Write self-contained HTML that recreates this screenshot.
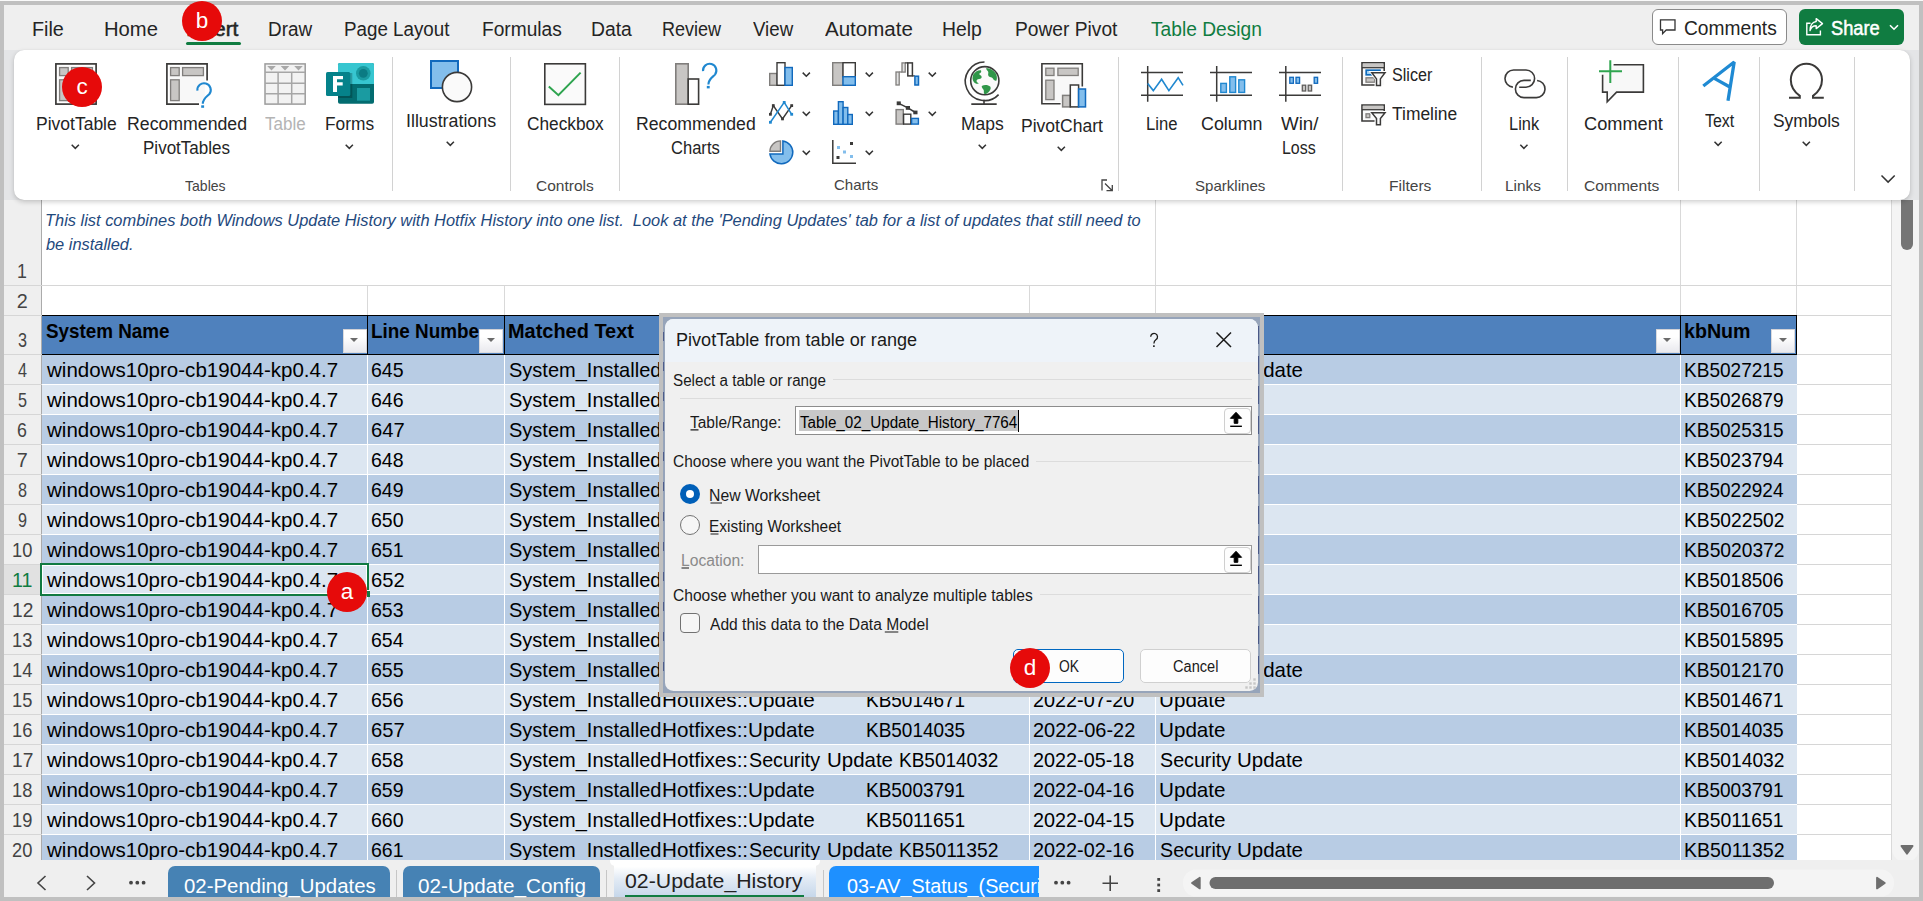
<!DOCTYPE html>
<html lang="en">
<head>
<meta charset="utf-8">
<title>Excel - PivotTable from table or range</title>
<style>
html,body{margin:0;padding:0}
body{width:1923px;height:901px;overflow:hidden;position:relative;background:#c0c0c0;font-family:"Liberation Sans",sans-serif;}
.a{position:absolute;display:block}
.t-semi{-webkit-text-stroke:0.5px currentColor}
.t{position:absolute;white-space:pre;line-height:1;transform-origin:0 0;display:block}
svg{position:absolute;overflow:visible}
.win{left:4px;top:5px;width:1915px;height:892px;background:#efefef}
.topedge{left:0;top:0;width:1923px;height:1px;background:#fafafa}
/* ribbon */
.ribside{left:4px;top:50px;width:1915px;height:150px;background:#e4e5e7}
.ribbon{left:14px;top:50px;width:1896px;height:150px;background:#fff;border-radius:10px;box-shadow:0 2px 5px rgba(0,0,0,.19),0 0 1px rgba(0,0,0,.10)}
.sep{width:1px;top:57px;height:134px;background:#d2d2d2}
.ins-ul{left:186px;top:42px;width:55px;height:3px;border-radius:2px;background:#107c41}
.btn-comments{left:1652px;top:9px;width:133px;height:34px;border:1px solid #8a8a8a;border-radius:6px;background:#fff}
.btn-share{left:1799px;top:9px;width:105px;height:36px;border-radius:6px;background:#107c41}
.mk{width:40px;height:40px;border-radius:50%;background:#e60a0a;color:#fff;font-size:22.5px;line-height:40px;text-align:center}
/* sheet */
.sheet{left:4px;top:200px;width:1888px;height:660px;background:#fff;overflow:hidden}
.rowhdr{left:4px;top:200px;width:37px;height:660px;background:#efefef}
.gl{background:#d6d6d6}
.vscroll{left:1892px;top:200px;width:27px;height:662px;background:#f4f4f4;border-radius:0 0 13px 13px}
.vthumb{left:1901px;top:200px;width:12px;height:50px;border-radius:0 0 6px 6px;background:#757575}
.hdr{background:#4f81bd}
.b1{background:#b8cce4}
.b2{background:#dce6f1}
.wl{background:#fff}
.bl{background:#000}
.fbtn{width:24px;height:24px;box-sizing:border-box;border:1px solid rgba(190,190,195,.55);background:linear-gradient(#ffffff 30%,#e9e9ee);}
.fbtn:after{content:"";position:absolute;left:6.5px;top:8.5px;border:4.6px solid transparent;border-top:4.8px solid #6b6b6b;border-bottom:0}
/* dialog */
.dframe{left:659px;top:313px;width:605px;height:383.7px;background:#c0c0c0}
.dframe2{left:662.7px;top:317px;width:597.3px;height:376.3px;background:#96a4ba}
.dlg{left:664.5px;top:318.5px;width:593.7px;height:372.2px;border-radius:8.5px;background:#f0f0f0;overflow:hidden}
.dtitle{left:0;top:0;width:595px;height:44px;background:#eef3f9}
.dline{height:1px;background:#dcdcdc}
.inp{background:#fff;border:1px solid #8c8c8c;box-sizing:border-box}
.ibtn{width:27px;height:26px;border:1px solid #cfcfcf;border-radius:4px;background:#fdfdfd;box-sizing:border-box}
/* sheet tabs */
.stbar{left:4px;top:860px;width:1915px;height:37px;background:#efefef}
.stab{top:866px;height:31px;border-radius:7px 7px 0 0}
.ssep{top:870px;width:1px;height:27px;background:#c6c6c6}
</style>
</head>
<body>
<div class="a win"></div>
<div class="a topedge"></div>
<!-- ===== Tab bar ===== -->
<div id="tabbar">
<div class="a ins-ul"></div>
<div class="a btn-comments"></div>
<svg style="left:1659px;top:18px" width="18" height="18" viewBox="0 0 18 18"><path d="M1.5 1.8h14.5v10.2H7.2L3.6 15.6V12H1.5z" fill="none" stroke="#333" stroke-width="1.3" stroke-linejoin="miter"/></svg>
<div class="a btn-share"></div>
<svg style="left:1805px;top:17px" width="20" height="20" viewBox="0 0 20 20"><g fill="none" stroke="#fff" stroke-width="1.4"><path d="M5.5 6.2H1.8v11.6h13.6V13.5"/><path d="M11.2 1.6l6.3 5-6.3 5V8.8C8 8.8 6 10.4 5 13.6 5 8.4 7.6 4.9 11.2 4.5z" stroke-linejoin="round"/></g></svg>
<svg style="left:1889px;top:24px" width="10" height="7" viewBox="0 0 10 7"><path d="M1 1.2l4 4 4-4" fill="none" stroke="#fff" stroke-width="1.6"/></svg>
<span class="t t-tab" style="left:31.99px;top:20.00px;font-size:19.5px;color:#242424;transform:scaleX(1.0143)">File</span>
<span class="t t-tab" style="left:103.96px;top:20.00px;font-size:19.5px;color:#242424;transform:scaleX(1.0365)">Home</span>
<span class="t t-tab" style="left:268.03px;top:20.00px;font-size:19.5px;color:#242424;transform:scaleX(0.9687)">Draw</span>
<span class="t t-tab" style="left:344.04px;top:20.00px;font-size:19.5px;color:#242424;transform:scaleX(0.9625)">Page Layout</span>
<span class="t t-tab" style="left:482.02px;top:20.00px;font-size:19.5px;color:#242424;transform:scaleX(0.9812)">Formulas</span>
<span class="t t-tab" style="left:591.01px;top:20.00px;font-size:19.5px;color:#242424;transform:scaleX(0.9914)">Data</span>
<span class="t t-tab" style="left:662.08px;top:20.00px;font-size:19.5px;color:#242424;transform:scaleX(0.9240)">Review</span>
<span class="t t-tab" style="left:753.00px;top:20.00px;font-size:19.5px;color:#242424;transform:scaleX(0.9572)">View</span>
<span class="t t-tab" style="left:825.00px;top:20.00px;font-size:19.5px;color:#242424;transform:scaleX(1.0530)">Automate</span>
<span class="t t-tab" style="left:942.01px;top:20.00px;font-size:19.5px;color:#242424;transform:scaleX(0.9934)">Help</span>
<span class="t t-tab" style="left:1015.02px;top:20.00px;font-size:19.5px;color:#242424;transform:scaleX(0.9843)">Power Pivot</span>
<span class="t t-tab t-semi" style="left:185.92px;top:20.00px;font-size:19.5px;color:#242424;transform:scaleX(1.0755)">Insert</span>
<span class="t t-tab" style="left:1151.00px;top:20.00px;font-size:19.5px;color:#107c41;transform:scaleX(0.9831)">Table Design</span>
<span class="t t-tab" style="left:1684.00px;top:19.00px;font-size:19.5px;color:#242424;transform:scaleX(0.9839)">Comments</span>
<span class="t t-tab t-semi" style="left:1831.00px;top:19.00px;font-size:19.5px;color:#ffffff;transform:scaleX(0.9377)">Share</span>
</div>
<!-- ===== Sheet ===== -->
<div id="sheet">
<div class="a sheet"></div>
<div class="a rowhdr"></div>
<div class="a" style="left:4px;top:564px;width:37px;height:31px;background:#e1e1e1;border-top:1px solid #c4c4c4;border-bottom:1px solid #c4c4c4;box-sizing:border-box"></div>
<div class="a" style="left:41px;top:200px;width:1px;height:660px;background:#ababab"></div>
<div class="a" style="left:367px;top:286px;width:1px;height:574px;background:#d9d9d9"></div>
<div class="a" style="left:504px;top:286px;width:1px;height:574px;background:#d9d9d9"></div>
<div class="a" style="left:1029px;top:286px;width:1px;height:574px;background:#d9d9d9"></div>
<div class="a" style="left:1155px;top:200px;width:1px;height:660px;background:#d9d9d9"></div>
<div class="a" style="left:1680px;top:200px;width:1px;height:660px;background:#d9d9d9"></div>
<div class="a" style="left:1796px;top:200px;width:1px;height:660px;background:#d9d9d9"></div>
<div class="a" style="left:1891px;top:200px;width:1px;height:660px;background:#d9d9d9"></div>
<div class="a gl" style="left:4px;top:285px;width:1887px;height:1px"></div>
<div class="a gl" style="left:4px;top:315px;width:1887px;height:1px"></div>
<div class="a gl" style="left:4px;top:354px;width:1887px;height:1px"></div>
<div class="a gl" style="left:4px;top:384px;width:1887px;height:1px"></div>
<div class="a gl" style="left:4px;top:414px;width:1887px;height:1px"></div>
<div class="a gl" style="left:4px;top:444px;width:1887px;height:1px"></div>
<div class="a gl" style="left:4px;top:474px;width:1887px;height:1px"></div>
<div class="a gl" style="left:4px;top:504px;width:1887px;height:1px"></div>
<div class="a gl" style="left:4px;top:534px;width:1887px;height:1px"></div>
<div class="a gl" style="left:4px;top:564px;width:1887px;height:1px"></div>
<div class="a gl" style="left:4px;top:594px;width:1887px;height:1px"></div>
<div class="a gl" style="left:4px;top:624px;width:1887px;height:1px"></div>
<div class="a gl" style="left:4px;top:654px;width:1887px;height:1px"></div>
<div class="a gl" style="left:4px;top:684px;width:1887px;height:1px"></div>
<div class="a gl" style="left:4px;top:714px;width:1887px;height:1px"></div>
<div class="a gl" style="left:4px;top:744px;width:1887px;height:1px"></div>
<div class="a gl" style="left:4px;top:774px;width:1887px;height:1px"></div>
<div class="a gl" style="left:4px;top:804px;width:1887px;height:1px"></div>
<div class="a gl" style="left:4px;top:834px;width:1887px;height:1px"></div>
<div class="a bl" style="left:42px;top:315px;width:1755px;height:40px"></div>
<div class="a hdr" style="left:42px;top:316px;width:325px;height:38px"></div>
<div class="a hdr" style="left:368px;top:316px;width:136px;height:38px"></div>
<div class="a hdr" style="left:505px;top:316px;width:524px;height:38px"></div>
<div class="a hdr" style="left:1030px;top:316px;width:125px;height:38px"></div>
<div class="a hdr" style="left:1156px;top:316px;width:524px;height:38px"></div>
<div class="a hdr" style="left:1681px;top:316px;width:115px;height:38px"></div>
<div class="a b1" style="left:42px;top:355px;width:1755px;height:29px"></div>
<div class="a wl" style="left:42px;top:384px;width:1755px;height:1px"></div>
<div class="a b2" style="left:42px;top:385px;width:1755px;height:29px"></div>
<div class="a wl" style="left:42px;top:414px;width:1755px;height:1px"></div>
<div class="a b1" style="left:42px;top:415px;width:1755px;height:29px"></div>
<div class="a wl" style="left:42px;top:444px;width:1755px;height:1px"></div>
<div class="a b2" style="left:42px;top:445px;width:1755px;height:29px"></div>
<div class="a wl" style="left:42px;top:474px;width:1755px;height:1px"></div>
<div class="a b1" style="left:42px;top:475px;width:1755px;height:29px"></div>
<div class="a wl" style="left:42px;top:504px;width:1755px;height:1px"></div>
<div class="a b2" style="left:42px;top:505px;width:1755px;height:29px"></div>
<div class="a wl" style="left:42px;top:534px;width:1755px;height:1px"></div>
<div class="a b1" style="left:42px;top:535px;width:1755px;height:29px"></div>
<div class="a wl" style="left:42px;top:564px;width:1755px;height:1px"></div>
<div class="a b2" style="left:42px;top:565px;width:1755px;height:29px"></div>
<div class="a wl" style="left:42px;top:594px;width:1755px;height:1px"></div>
<div class="a b1" style="left:42px;top:595px;width:1755px;height:29px"></div>
<div class="a wl" style="left:42px;top:624px;width:1755px;height:1px"></div>
<div class="a b2" style="left:42px;top:625px;width:1755px;height:29px"></div>
<div class="a wl" style="left:42px;top:654px;width:1755px;height:1px"></div>
<div class="a b1" style="left:42px;top:655px;width:1755px;height:29px"></div>
<div class="a wl" style="left:42px;top:684px;width:1755px;height:1px"></div>
<div class="a b2" style="left:42px;top:685px;width:1755px;height:29px"></div>
<div class="a wl" style="left:42px;top:714px;width:1755px;height:1px"></div>
<div class="a b1" style="left:42px;top:715px;width:1755px;height:29px"></div>
<div class="a wl" style="left:42px;top:744px;width:1755px;height:1px"></div>
<div class="a b2" style="left:42px;top:745px;width:1755px;height:29px"></div>
<div class="a wl" style="left:42px;top:774px;width:1755px;height:1px"></div>
<div class="a b1" style="left:42px;top:775px;width:1755px;height:29px"></div>
<div class="a wl" style="left:42px;top:804px;width:1755px;height:1px"></div>
<div class="a b2" style="left:42px;top:805px;width:1755px;height:29px"></div>
<div class="a wl" style="left:42px;top:834px;width:1755px;height:1px"></div>
<div class="a b1" style="left:42px;top:835px;width:1755px;height:29px"></div>
<div class="a wl" style="left:42px;top:864px;width:1755px;height:1px"></div>
<div class="a wl" style="left:367px;top:355px;width:1px;height:505px"></div>
<div class="a wl" style="left:504px;top:355px;width:1px;height:505px"></div>
<div class="a wl" style="left:1029px;top:355px;width:1px;height:505px"></div>
<div class="a wl" style="left:1155px;top:355px;width:1px;height:505px"></div>
<div class="a wl" style="left:1680px;top:355px;width:1px;height:505px"></div>
<div class="a fbtn" style="left:342.5px;top:328.7px"></div>
<div class="a fbtn" style="left:479.2px;top:328.7px"></div>
<div class="a fbtn" style="left:1655.5px;top:328.7px"></div>
<div class="a fbtn" style="left:1771.4px;top:328.7px"></div>
<span class="t t-rown" style="left:16.90px;top:262.00px;font-size:19.8px;color:#444444;transform:scaleX(0.9000)">1</span>
<span class="t t-rown" style="left:16.80px;top:292.00px;font-size:19.8px;color:#444444;transform:scaleX(1.0000)">2</span>
<span class="t t-rown" style="left:17.80px;top:331.00px;font-size:19.8px;color:#444444;transform:scaleX(0.8182)">3</span>
<span class="t t-rown" style="left:17.80px;top:361.00px;font-size:19.8px;color:#444444;transform:scaleX(0.8182)">4</span>
<span class="t t-rown" style="left:17.80px;top:391.00px;font-size:19.8px;color:#444444;transform:scaleX(0.8182)">5</span>
<span class="t t-rown" style="left:16.90px;top:421.00px;font-size:19.8px;color:#444444;transform:scaleX(0.9000)">6</span>
<span class="t t-rown" style="left:16.80px;top:451.00px;font-size:19.8px;color:#444444;transform:scaleX(1.0000)">7</span>
<span class="t t-rown" style="left:17.80px;top:481.00px;font-size:19.8px;color:#444444;transform:scaleX(0.8182)">8</span>
<span class="t t-rown" style="left:17.80px;top:511.00px;font-size:19.8px;color:#444444;transform:scaleX(0.8182)">9</span>
<span class="t t-rown" style="left:11.68px;top:541.00px;font-size:19.8px;color:#444444;transform:scaleX(0.9237)">10</span>
<span class="t t-rown" style="left:11.61px;top:571.00px;font-size:19.8px;color:#107c41;transform:scaleX(0.9932)">11</span>
<span class="t t-rown" style="left:11.63px;top:601.00px;font-size:19.8px;color:#444444;transform:scaleX(0.9699)">12</span>
<span class="t t-rown" style="left:11.68px;top:631.00px;font-size:19.8px;color:#444444;transform:scaleX(0.9237)">13</span>
<span class="t t-rown" style="left:11.68px;top:661.00px;font-size:19.8px;color:#444444;transform:scaleX(0.9237)">14</span>
<span class="t t-rown" style="left:11.68px;top:691.00px;font-size:19.8px;color:#444444;transform:scaleX(0.9237)">15</span>
<span class="t t-rown" style="left:11.68px;top:721.00px;font-size:19.8px;color:#444444;transform:scaleX(0.9237)">16</span>
<span class="t t-rown" style="left:11.63px;top:751.00px;font-size:19.8px;color:#444444;transform:scaleX(0.9699)">17</span>
<span class="t t-rown" style="left:11.68px;top:781.00px;font-size:19.8px;color:#444444;transform:scaleX(0.9237)">18</span>
<span class="t t-rown" style="left:11.68px;top:811.00px;font-size:19.8px;color:#444444;transform:scaleX(0.9237)">19</span>
<span class="t t-rown" style="left:11.68px;top:841.00px;font-size:19.8px;color:#444444;transform:scaleX(0.9237)">20</span>
<div class="a" id="sheettext" style="left:0;top:200px;width:1892px;height:660px;overflow:hidden"><div class="a" style="left:0;top:-200px">
<span class="t t-sheet" style="left:45.16px;top:213.00px;font-size:15.8px;color:#1f497d;transform:scaleX(1.0383);font-style:italic">This list combines both Windows Update History with Hotfix History into one list.  Look at the 'Pending Updates' tab for a list of updates that still need to</span>
<span class="t t-sheet" style="left:46.00px;top:237.00px;font-size:15.8px;color:#1f497d;transform:scaleX(1.0372);font-style:italic">be installed.</span>
<span class="t t-sheet" style="left:45.50px;top:322.00px;font-size:19.8px;color:#000;transform:scaleX(0.9519);font-weight:700">System Name</span>
<span class="t t-sheet" style="left:370.75px;top:322.00px;font-size:19.8px;color:#000;transform:scaleX(0.9537);font-weight:700">Line Numbe</span>
<span class="t t-sheet" style="left:507.69px;top:322.00px;font-size:19.8px;color:#000;transform:scaleX(1.0076);font-weight:700">Matched Text</span>
<span class="t t-sheet" style="left:1684.01px;top:322.00px;font-size:19.8px;color:#000;transform:scaleX(0.9931);font-weight:700">kbNum</span>
<span class="t t-sheet" style="left:46.64px;top:361.00px;font-size:19.8px;color:#000;transform:scaleX(1.0381)">windows10pro-cb19044-kp0.4.7</span>
<span class="t t-sheet" style="left:370.71px;top:361.00px;font-size:19.8px;color:#000;transform:scaleX(0.9874)">645</span>
<span class="t t-sheet" style="left:508.80px;top:361.00px;font-size:19.8px;color:#000;transform:scaleX(1.0118)">System_Installed</span>
<span class="t t-sheet" style="left:662.26px;top:361.00px;font-size:19.8px;color:#000;transform:scaleX(1.0444)">Hotfixes::</span>
<span class="t t-sheet" style="left:749.20px;top:361.00px;font-size:19.8px;color:#000;transform:scaleX(0.9949)">Security</span>
<span class="t t-sheet" style="left:826.87px;top:361.00px;font-size:19.8px;color:#000;transform:scaleX(1.0337)">Update</span>
<span class="t t-sheet" style="left:898.55px;top:361.00px;font-size:19.8px;color:#000;transform:scaleX(0.9512)">KB5027215</span>
<span class="t t-sheet" style="left:1159.80px;top:361.00px;font-size:19.8px;color:#000;transform:scaleX(0.9949)">Security</span>
<span class="t t-sheet" style="left:1237.47px;top:361.00px;font-size:19.8px;color:#000;transform:scaleX(1.0337)">Update</span>
<span class="t t-sheet" style="left:1684.04px;top:361.00px;font-size:19.8px;color:#000;transform:scaleX(0.9619)">KB5027215</span>
<span class="t t-sheet" style="left:46.64px;top:391.00px;font-size:19.8px;color:#000;transform:scaleX(1.0381)">windows10pro-cb19044-kp0.4.7</span>
<span class="t t-sheet" style="left:370.71px;top:391.00px;font-size:19.8px;color:#000;transform:scaleX(0.9874)">646</span>
<span class="t t-sheet" style="left:508.80px;top:391.00px;font-size:19.8px;color:#000;transform:scaleX(1.0118)">System_Installed</span>
<span class="t t-sheet" style="left:662.26px;top:391.00px;font-size:19.8px;color:#000;transform:scaleX(1.0444)">Hotfixes::</span>
<span class="t t-sheet" style="left:748.46px;top:391.00px;font-size:19.8px;color:#000;transform:scaleX(1.0448)">Update</span>
<span class="t t-sheet" style="left:866.04px;top:391.00px;font-size:19.8px;color:#000;transform:scaleX(0.9590)">KB5026879</span>
<span class="t t-sheet" style="left:1158.96px;top:391.00px;font-size:19.8px;color:#000;transform:scaleX(1.0432)">Update</span>
<span class="t t-sheet" style="left:1684.04px;top:391.00px;font-size:19.8px;color:#000;transform:scaleX(0.9619)">KB5026879</span>
<span class="t t-sheet" style="left:46.64px;top:421.00px;font-size:19.8px;color:#000;transform:scaleX(1.0381)">windows10pro-cb19044-kp0.4.7</span>
<span class="t t-sheet" style="left:370.68px;top:421.00px;font-size:19.8px;color:#000;transform:scaleX(1.0193)">647</span>
<span class="t t-sheet" style="left:508.80px;top:421.00px;font-size:19.8px;color:#000;transform:scaleX(1.0118)">System_Installed</span>
<span class="t t-sheet" style="left:662.26px;top:421.00px;font-size:19.8px;color:#000;transform:scaleX(1.0444)">Hotfixes::</span>
<span class="t t-sheet" style="left:748.46px;top:421.00px;font-size:19.8px;color:#000;transform:scaleX(1.0448)">Update</span>
<span class="t t-sheet" style="left:866.04px;top:421.00px;font-size:19.8px;color:#000;transform:scaleX(0.9590)">KB5025315</span>
<span class="t t-sheet" style="left:1158.96px;top:421.00px;font-size:19.8px;color:#000;transform:scaleX(1.0432)">Update</span>
<span class="t t-sheet" style="left:1684.04px;top:421.00px;font-size:19.8px;color:#000;transform:scaleX(0.9619)">KB5025315</span>
<span class="t t-sheet" style="left:46.64px;top:451.00px;font-size:19.8px;color:#000;transform:scaleX(1.0381)">windows10pro-cb19044-kp0.4.7</span>
<span class="t t-sheet" style="left:370.71px;top:451.00px;font-size:19.8px;color:#000;transform:scaleX(0.9874)">648</span>
<span class="t t-sheet" style="left:508.80px;top:451.00px;font-size:19.8px;color:#000;transform:scaleX(1.0118)">System_Installed</span>
<span class="t t-sheet" style="left:662.26px;top:451.00px;font-size:19.8px;color:#000;transform:scaleX(1.0444)">Hotfixes::</span>
<span class="t t-sheet" style="left:748.46px;top:451.00px;font-size:19.8px;color:#000;transform:scaleX(1.0448)">Update</span>
<span class="t t-sheet" style="left:866.04px;top:451.00px;font-size:19.8px;color:#000;transform:scaleX(0.9590)">KB5023794</span>
<span class="t t-sheet" style="left:1158.96px;top:451.00px;font-size:19.8px;color:#000;transform:scaleX(1.0432)">Update</span>
<span class="t t-sheet" style="left:1684.04px;top:451.00px;font-size:19.8px;color:#000;transform:scaleX(0.9619)">KB5023794</span>
<span class="t t-sheet" style="left:46.64px;top:481.00px;font-size:19.8px;color:#000;transform:scaleX(1.0381)">windows10pro-cb19044-kp0.4.7</span>
<span class="t t-sheet" style="left:370.71px;top:481.00px;font-size:19.8px;color:#000;transform:scaleX(0.9874)">649</span>
<span class="t t-sheet" style="left:508.80px;top:481.00px;font-size:19.8px;color:#000;transform:scaleX(1.0118)">System_Installed</span>
<span class="t t-sheet" style="left:662.26px;top:481.00px;font-size:19.8px;color:#000;transform:scaleX(1.0444)">Hotfixes::</span>
<span class="t t-sheet" style="left:748.46px;top:481.00px;font-size:19.8px;color:#000;transform:scaleX(1.0448)">Update</span>
<span class="t t-sheet" style="left:866.04px;top:481.00px;font-size:19.8px;color:#000;transform:scaleX(0.9590)">KB5022924</span>
<span class="t t-sheet" style="left:1158.96px;top:481.00px;font-size:19.8px;color:#000;transform:scaleX(1.0432)">Update</span>
<span class="t t-sheet" style="left:1684.04px;top:481.00px;font-size:19.8px;color:#000;transform:scaleX(0.9619)">KB5022924</span>
<span class="t t-sheet" style="left:46.64px;top:511.00px;font-size:19.8px;color:#000;transform:scaleX(1.0381)">windows10pro-cb19044-kp0.4.7</span>
<span class="t t-sheet" style="left:370.71px;top:511.00px;font-size:19.8px;color:#000;transform:scaleX(0.9874)">650</span>
<span class="t t-sheet" style="left:508.80px;top:511.00px;font-size:19.8px;color:#000;transform:scaleX(1.0118)">System_Installed</span>
<span class="t t-sheet" style="left:662.26px;top:511.00px;font-size:19.8px;color:#000;transform:scaleX(1.0444)">Hotfixes::</span>
<span class="t t-sheet" style="left:748.46px;top:511.00px;font-size:19.8px;color:#000;transform:scaleX(1.0448)">Update</span>
<span class="t t-sheet" style="left:866.03px;top:511.00px;font-size:19.8px;color:#000;transform:scaleX(0.9685)">KB5022502</span>
<span class="t t-sheet" style="left:1158.96px;top:511.00px;font-size:19.8px;color:#000;transform:scaleX(1.0432)">Update</span>
<span class="t t-sheet" style="left:1684.03px;top:511.00px;font-size:19.8px;color:#000;transform:scaleX(0.9714)">KB5022502</span>
<span class="t t-sheet" style="left:46.64px;top:541.00px;font-size:19.8px;color:#000;transform:scaleX(1.0381)">windows10pro-cb19044-kp0.4.7</span>
<span class="t t-sheet" style="left:370.71px;top:541.00px;font-size:19.8px;color:#000;transform:scaleX(0.9874)">651</span>
<span class="t t-sheet" style="left:508.80px;top:541.00px;font-size:19.8px;color:#000;transform:scaleX(1.0118)">System_Installed</span>
<span class="t t-sheet" style="left:662.26px;top:541.00px;font-size:19.8px;color:#000;transform:scaleX(1.0444)">Hotfixes::</span>
<span class="t t-sheet" style="left:748.46px;top:541.00px;font-size:19.8px;color:#000;transform:scaleX(1.0448)">Update</span>
<span class="t t-sheet" style="left:866.03px;top:541.00px;font-size:19.8px;color:#000;transform:scaleX(0.9685)">KB5020372</span>
<span class="t t-sheet" style="left:1158.96px;top:541.00px;font-size:19.8px;color:#000;transform:scaleX(1.0432)">Update</span>
<span class="t t-sheet" style="left:1684.03px;top:541.00px;font-size:19.8px;color:#000;transform:scaleX(0.9714)">KB5020372</span>
<span class="t t-sheet" style="left:46.64px;top:571.00px;font-size:19.8px;color:#000;transform:scaleX(1.0381)">windows10pro-cb19044-kp0.4.7</span>
<span class="t t-sheet" style="left:370.68px;top:571.00px;font-size:19.8px;color:#000;transform:scaleX(1.0193)">652</span>
<span class="t t-sheet" style="left:508.80px;top:571.00px;font-size:19.8px;color:#000;transform:scaleX(1.0118)">System_Installed</span>
<span class="t t-sheet" style="left:662.26px;top:571.00px;font-size:19.8px;color:#000;transform:scaleX(1.0444)">Hotfixes::</span>
<span class="t t-sheet" style="left:748.46px;top:571.00px;font-size:19.8px;color:#000;transform:scaleX(1.0448)">Update</span>
<span class="t t-sheet" style="left:866.04px;top:571.00px;font-size:19.8px;color:#000;transform:scaleX(0.9590)">KB5018506</span>
<span class="t t-sheet" style="left:1158.96px;top:571.00px;font-size:19.8px;color:#000;transform:scaleX(1.0432)">Update</span>
<span class="t t-sheet" style="left:1684.04px;top:571.00px;font-size:19.8px;color:#000;transform:scaleX(0.9619)">KB5018506</span>
<span class="t t-sheet" style="left:46.64px;top:601.00px;font-size:19.8px;color:#000;transform:scaleX(1.0381)">windows10pro-cb19044-kp0.4.7</span>
<span class="t t-sheet" style="left:370.71px;top:601.00px;font-size:19.8px;color:#000;transform:scaleX(0.9874)">653</span>
<span class="t t-sheet" style="left:508.80px;top:601.00px;font-size:19.8px;color:#000;transform:scaleX(1.0118)">System_Installed</span>
<span class="t t-sheet" style="left:662.26px;top:601.00px;font-size:19.8px;color:#000;transform:scaleX(1.0444)">Hotfixes::</span>
<span class="t t-sheet" style="left:748.46px;top:601.00px;font-size:19.8px;color:#000;transform:scaleX(1.0448)">Update</span>
<span class="t t-sheet" style="left:866.04px;top:601.00px;font-size:19.8px;color:#000;transform:scaleX(0.9590)">KB5016705</span>
<span class="t t-sheet" style="left:1158.96px;top:601.00px;font-size:19.8px;color:#000;transform:scaleX(1.0432)">Update</span>
<span class="t t-sheet" style="left:1684.04px;top:601.00px;font-size:19.8px;color:#000;transform:scaleX(0.9619)">KB5016705</span>
<span class="t t-sheet" style="left:46.64px;top:631.00px;font-size:19.8px;color:#000;transform:scaleX(1.0381)">windows10pro-cb19044-kp0.4.7</span>
<span class="t t-sheet" style="left:370.71px;top:631.00px;font-size:19.8px;color:#000;transform:scaleX(0.9874)">654</span>
<span class="t t-sheet" style="left:508.80px;top:631.00px;font-size:19.8px;color:#000;transform:scaleX(1.0118)">System_Installed</span>
<span class="t t-sheet" style="left:662.26px;top:631.00px;font-size:19.8px;color:#000;transform:scaleX(1.0444)">Hotfixes::</span>
<span class="t t-sheet" style="left:748.46px;top:631.00px;font-size:19.8px;color:#000;transform:scaleX(1.0448)">Update</span>
<span class="t t-sheet" style="left:866.04px;top:631.00px;font-size:19.8px;color:#000;transform:scaleX(0.9590)">KB5015895</span>
<span class="t t-sheet" style="left:1158.96px;top:631.00px;font-size:19.8px;color:#000;transform:scaleX(1.0432)">Update</span>
<span class="t t-sheet" style="left:1684.04px;top:631.00px;font-size:19.8px;color:#000;transform:scaleX(0.9619)">KB5015895</span>
<span class="t t-sheet" style="left:46.64px;top:661.00px;font-size:19.8px;color:#000;transform:scaleX(1.0381)">windows10pro-cb19044-kp0.4.7</span>
<span class="t t-sheet" style="left:370.71px;top:661.00px;font-size:19.8px;color:#000;transform:scaleX(0.9874)">655</span>
<span class="t t-sheet" style="left:508.80px;top:661.00px;font-size:19.8px;color:#000;transform:scaleX(1.0118)">System_Installed</span>
<span class="t t-sheet" style="left:662.26px;top:661.00px;font-size:19.8px;color:#000;transform:scaleX(1.0444)">Hotfixes::</span>
<span class="t t-sheet" style="left:749.20px;top:661.00px;font-size:19.8px;color:#000;transform:scaleX(0.9949)">Security</span>
<span class="t t-sheet" style="left:826.87px;top:661.00px;font-size:19.8px;color:#000;transform:scaleX(1.0337)">Update</span>
<span class="t t-sheet" style="left:898.55px;top:661.00px;font-size:19.8px;color:#000;transform:scaleX(0.9512)">KB5012170</span>
<span class="t t-sheet" style="left:1159.80px;top:661.00px;font-size:19.8px;color:#000;transform:scaleX(0.9949)">Security</span>
<span class="t t-sheet" style="left:1237.47px;top:661.00px;font-size:19.8px;color:#000;transform:scaleX(1.0337)">Update</span>
<span class="t t-sheet" style="left:1684.04px;top:661.00px;font-size:19.8px;color:#000;transform:scaleX(0.9619)">KB5012170</span>
<span class="t t-sheet" style="left:46.64px;top:691.00px;font-size:19.8px;color:#000;transform:scaleX(1.0381)">windows10pro-cb19044-kp0.4.7</span>
<span class="t t-sheet" style="left:370.71px;top:691.00px;font-size:19.8px;color:#000;transform:scaleX(0.9874)">656</span>
<span class="t t-sheet" style="left:508.80px;top:691.00px;font-size:19.8px;color:#000;transform:scaleX(1.0118)">System_Installed</span>
<span class="t t-sheet" style="left:662.26px;top:691.00px;font-size:19.8px;color:#000;transform:scaleX(1.0444)">Hotfixes::</span>
<span class="t t-sheet" style="left:748.46px;top:691.00px;font-size:19.8px;color:#000;transform:scaleX(1.0448)">Update</span>
<span class="t t-sheet" style="left:866.04px;top:691.00px;font-size:19.8px;color:#000;transform:scaleX(0.9590)">KB5014671</span>
<span class="t t-sheet" style="left:1158.96px;top:691.00px;font-size:19.8px;color:#000;transform:scaleX(1.0432)">Update</span>
<span class="t t-sheet" style="left:1032.70px;top:691.00px;font-size:19.8px;color:#000;transform:scaleX(1.0012)">2022-07-20</span>
<span class="t t-sheet" style="left:1684.04px;top:691.00px;font-size:19.8px;color:#000;transform:scaleX(0.9619)">KB5014671</span>
<span class="t t-sheet" style="left:46.64px;top:721.00px;font-size:19.8px;color:#000;transform:scaleX(1.0381)">windows10pro-cb19044-kp0.4.7</span>
<span class="t t-sheet" style="left:370.68px;top:721.00px;font-size:19.8px;color:#000;transform:scaleX(1.0193)">657</span>
<span class="t t-sheet" style="left:508.80px;top:721.00px;font-size:19.8px;color:#000;transform:scaleX(1.0118)">System_Installed</span>
<span class="t t-sheet" style="left:662.26px;top:721.00px;font-size:19.8px;color:#000;transform:scaleX(1.0444)">Hotfixes::</span>
<span class="t t-sheet" style="left:748.46px;top:721.00px;font-size:19.8px;color:#000;transform:scaleX(1.0448)">Update</span>
<span class="t t-sheet" style="left:866.04px;top:721.00px;font-size:19.8px;color:#000;transform:scaleX(0.9590)">KB5014035</span>
<span class="t t-sheet" style="left:1158.96px;top:721.00px;font-size:19.8px;color:#000;transform:scaleX(1.0432)">Update</span>
<span class="t t-sheet" style="left:1032.69px;top:721.00px;font-size:19.8px;color:#000;transform:scaleX(1.0112)">2022-06-22</span>
<span class="t t-sheet" style="left:1684.04px;top:721.00px;font-size:19.8px;color:#000;transform:scaleX(0.9619)">KB5014035</span>
<span class="t t-sheet" style="left:46.64px;top:751.00px;font-size:19.8px;color:#000;transform:scaleX(1.0381)">windows10pro-cb19044-kp0.4.7</span>
<span class="t t-sheet" style="left:370.71px;top:751.00px;font-size:19.8px;color:#000;transform:scaleX(0.9874)">658</span>
<span class="t t-sheet" style="left:508.80px;top:751.00px;font-size:19.8px;color:#000;transform:scaleX(1.0118)">System_Installed</span>
<span class="t t-sheet" style="left:662.26px;top:751.00px;font-size:19.8px;color:#000;transform:scaleX(1.0444)">Hotfixes::</span>
<span class="t t-sheet" style="left:749.20px;top:751.00px;font-size:19.8px;color:#000;transform:scaleX(0.9949)">Security</span>
<span class="t t-sheet" style="left:826.87px;top:751.00px;font-size:19.8px;color:#000;transform:scaleX(1.0337)">Update</span>
<span class="t t-sheet" style="left:898.54px;top:751.00px;font-size:19.8px;color:#000;transform:scaleX(0.9606)">KB5014032</span>
<span class="t t-sheet" style="left:1159.80px;top:751.00px;font-size:19.8px;color:#000;transform:scaleX(0.9949)">Security</span>
<span class="t t-sheet" style="left:1237.47px;top:751.00px;font-size:19.8px;color:#000;transform:scaleX(1.0337)">Update</span>
<span class="t t-sheet" style="left:1032.70px;top:751.00px;font-size:19.8px;color:#000;transform:scaleX(1.0012)">2022-05-18</span>
<span class="t t-sheet" style="left:1684.03px;top:751.00px;font-size:19.8px;color:#000;transform:scaleX(0.9714)">KB5014032</span>
<span class="t t-sheet" style="left:46.64px;top:781.00px;font-size:19.8px;color:#000;transform:scaleX(1.0381)">windows10pro-cb19044-kp0.4.7</span>
<span class="t t-sheet" style="left:370.71px;top:781.00px;font-size:19.8px;color:#000;transform:scaleX(0.9874)">659</span>
<span class="t t-sheet" style="left:508.80px;top:781.00px;font-size:19.8px;color:#000;transform:scaleX(1.0118)">System_Installed</span>
<span class="t t-sheet" style="left:662.26px;top:781.00px;font-size:19.8px;color:#000;transform:scaleX(1.0444)">Hotfixes::</span>
<span class="t t-sheet" style="left:748.46px;top:781.00px;font-size:19.8px;color:#000;transform:scaleX(1.0448)">Update</span>
<span class="t t-sheet" style="left:866.04px;top:781.00px;font-size:19.8px;color:#000;transform:scaleX(0.9590)">KB5003791</span>
<span class="t t-sheet" style="left:1158.96px;top:781.00px;font-size:19.8px;color:#000;transform:scaleX(1.0432)">Update</span>
<span class="t t-sheet" style="left:1032.70px;top:781.00px;font-size:19.8px;color:#000;transform:scaleX(1.0012)">2022-04-16</span>
<span class="t t-sheet" style="left:1684.04px;top:781.00px;font-size:19.8px;color:#000;transform:scaleX(0.9619)">KB5003791</span>
<span class="t t-sheet" style="left:46.64px;top:811.00px;font-size:19.8px;color:#000;transform:scaleX(1.0381)">windows10pro-cb19044-kp0.4.7</span>
<span class="t t-sheet" style="left:370.71px;top:811.00px;font-size:19.8px;color:#000;transform:scaleX(0.9874)">660</span>
<span class="t t-sheet" style="left:508.80px;top:811.00px;font-size:19.8px;color:#000;transform:scaleX(1.0118)">System_Installed</span>
<span class="t t-sheet" style="left:662.26px;top:811.00px;font-size:19.8px;color:#000;transform:scaleX(1.0444)">Hotfixes::</span>
<span class="t t-sheet" style="left:748.46px;top:811.00px;font-size:19.8px;color:#000;transform:scaleX(1.0448)">Update</span>
<span class="t t-sheet" style="left:866.03px;top:811.00px;font-size:19.8px;color:#000;transform:scaleX(0.9730)">KB5011651</span>
<span class="t t-sheet" style="left:1158.96px;top:811.00px;font-size:19.8px;color:#000;transform:scaleX(1.0432)">Update</span>
<span class="t t-sheet" style="left:1032.70px;top:811.00px;font-size:19.8px;color:#000;transform:scaleX(1.0012)">2022-04-15</span>
<span class="t t-sheet" style="left:1684.02px;top:811.00px;font-size:19.8px;color:#000;transform:scaleX(0.9759)">KB5011651</span>
<span class="t t-sheet" style="left:46.64px;top:841.00px;font-size:19.8px;color:#000;transform:scaleX(1.0381)">windows10pro-cb19044-kp0.4.7</span>
<span class="t t-sheet" style="left:370.71px;top:841.00px;font-size:19.8px;color:#000;transform:scaleX(0.9874)">661</span>
<span class="t t-sheet" style="left:508.80px;top:841.00px;font-size:19.8px;color:#000;transform:scaleX(1.0118)">System_Installed</span>
<span class="t t-sheet" style="left:662.26px;top:841.00px;font-size:19.8px;color:#000;transform:scaleX(1.0444)">Hotfixes::</span>
<span class="t t-sheet" style="left:749.20px;top:841.00px;font-size:19.8px;color:#000;transform:scaleX(0.9949)">Security</span>
<span class="t t-sheet" style="left:826.87px;top:841.00px;font-size:19.8px;color:#000;transform:scaleX(1.0337)">Update</span>
<span class="t t-sheet" style="left:898.53px;top:841.00px;font-size:19.8px;color:#000;transform:scaleX(0.9747)">KB5011352</span>
<span class="t t-sheet" style="left:1159.80px;top:841.00px;font-size:19.8px;color:#000;transform:scaleX(0.9949)">Security</span>
<span class="t t-sheet" style="left:1237.47px;top:841.00px;font-size:19.8px;color:#000;transform:scaleX(1.0337)">Update</span>
<span class="t t-sheet" style="left:1032.70px;top:841.00px;font-size:19.8px;color:#000;transform:scaleX(1.0012)">2022-02-16</span>
<span class="t t-sheet" style="left:1684.01px;top:841.00px;font-size:19.8px;color:#000;transform:scaleX(0.9857)">KB5011352</span>
</div></div>
<div class="a" style="left:40px;top:563px;width:329px;height:33.300px;border:2px solid #117a41;box-sizing:border-box;box-shadow:inset 0 0 0 1px #fff"></div>
<div class="a" style="left:366px;top:590.300px;width:4px;height:6.400px;background:#117a41;border-left:1px solid #fff;border-top:1px solid #fff;box-sizing:border-box"></div>
<div class="a vscroll"></div>
<div class="a vthumb"></div>
<svg style="left:1899px;top:844px" width="16" height="12" viewBox="0 0 16 12"><path d="M2.400 2h11.200l-5.600 7.800z" fill="#6e6e6e" stroke="#6e6e6e" stroke-width="1.800" stroke-linejoin="round"/></svg>
<div class="a" style="left:42px;top:860px;width:1850px;height:1px;background:#e2e2e2"></div>
<div class="a mk" style="left:327px;top:572px">a</div>
</div>
<!-- ===== Ribbon ===== -->
<div id="ribbon">
<div class="a ribside"></div>
<div class="a ribbon"></div>
<div class="a sep" style="left:392px"></div>
<div class="a sep" style="left:510px"></div>
<div class="a sep" style="left:619px"></div>
<div class="a sep" style="left:1118px"></div>
<div class="a sep" style="left:1342px"></div>
<div class="a sep" style="left:1481px"></div>
<div class="a sep" style="left:1567px"></div>
<div class="a sep" style="left:1678px"></div>
<div class="a sep" style="left:1759px"></div>
<div class="a sep" style="left:1854px"></div>
<span class="t t-rib" style="left:36.00px;top:116.00px;font-size:17.5px;color:#242424;transform:scaleX(0.9999)">PivotTable</span>
<span class="t t-rib" style="left:126.69px;top:116.00px;font-size:17.5px;color:#242424;transform:scaleX(1.0116)">Recommended</span>
<span class="t t-rib" style="left:143.03px;top:140.00px;font-size:17.5px;color:#242424;transform:scaleX(0.9725)">PivotTables</span>
<span class="t t-rib" style="left:324.71px;top:116.00px;font-size:17.5px;color:#242424;transform:scaleX(0.9892)">Forms</span>
<span class="t t-rib" style="left:405.58px;top:113.00px;font-size:17.5px;color:#242424;transform:scaleX(1.0176)">Illustrations</span>
<span class="t t-rib" style="left:527.00px;top:116.00px;font-size:17.5px;color:#242424;transform:scaleX(0.9863)">Checkbox</span>
<span class="t t-rib" style="left:635.99px;top:116.00px;font-size:17.5px;color:#242424;transform:scaleX(1.0091)">Recommended</span>
<span class="t t-rib" style="left:671.00px;top:140.00px;font-size:17.5px;color:#242424;transform:scaleX(0.9461)">Charts</span>
<span class="t t-rib" style="left:961.00px;top:116.00px;font-size:17.5px;color:#242424;transform:scaleX(0.9990)">Maps</span>
<span class="t t-rib" style="left:1021.00px;top:118.00px;font-size:17.5px;color:#242424;transform:scaleX(1.0020)">PivotChart</span>
<span class="t t-rib" style="left:1146.05px;top:116.00px;font-size:17.5px;color:#242424;transform:scaleX(0.9505)">Line</span>
<span class="t t-rib" style="left:1200.70px;top:116.00px;font-size:17.5px;color:#242424;transform:scaleX(1.0190)">Column</span>
<span class="t t-rib" style="left:1281.00px;top:116.00px;font-size:17.5px;color:#242424;transform:scaleX(1.0701)">Win/</span>
<span class="t t-rib" style="left:1282.09px;top:140.00px;font-size:17.5px;color:#242424;transform:scaleX(0.9112)">Loss</span>
<span class="t t-rib" style="left:1391.50px;top:67.00px;font-size:17.5px;color:#242424;transform:scaleX(0.9219)">Slicer</span>
<span class="t t-rib" style="left:1391.50px;top:106.00px;font-size:17.5px;color:#242424;transform:scaleX(0.9962)">Timeline</span>
<span class="t t-rib" style="left:1509.06px;top:116.00px;font-size:17.5px;color:#242424;transform:scaleX(0.9377)">Link</span>
<span class="t t-rib" style="left:1584.00px;top:116.00px;font-size:17.5px;color:#242424;transform:scaleX(1.0396)">Comment</span>
<span class="t t-rib" style="left:1704.60px;top:113.00px;font-size:17.5px;color:#242424;transform:scaleX(0.9121)">Text</span>
<span class="t t-rib" style="left:1773.00px;top:113.00px;font-size:17.5px;color:#242424;transform:scaleX(0.9948)">Symbols</span>
<span class="t t-rib" style="left:265.00px;top:116.00px;font-size:17.5px;color:#b4b4b4;transform:scaleX(0.9732)">Table</span>
<span class="t t-rib" style="left:184.70px;top:179.00px;font-size:14.6px;color:#444444;transform:scaleX(0.9621)">Tables</span>
<span class="t t-rib" style="left:535.60px;top:179.00px;font-size:14.6px;color:#444444;transform:scaleX(1.0621)">Controls</span>
<span class="t t-rib" style="left:834.00px;top:178.00px;font-size:14.6px;color:#444444;transform:scaleX(1.0308)">Charts</span>
<span class="t t-rib" style="left:1195.00px;top:179.00px;font-size:14.6px;color:#444444;transform:scaleX(1.0318)">Sparklines</span>
<span class="t t-rib" style="left:1388.93px;top:179.00px;font-size:14.6px;color:#444444;transform:scaleX(1.0669)">Filters</span>
<span class="t t-rib" style="left:1505.45px;top:179.00px;font-size:14.6px;color:#444444;transform:scaleX(1.0527)">Links</span>
<span class="t t-rib" style="left:1584.00px;top:179.00px;font-size:14.6px;color:#444444;transform:scaleX(1.0675)">Comments</span>
<svg style="left:0;top:0" width="1923" height="200" viewBox="0 0 1923 200">
<defs>
<path id="chev" d="M0.7 0.8l3.6 3.6 3.6-3.6" fill="none" stroke="#333" stroke-width="1.5"/>
<g id="qm"><path d="M1.4 8.6A6.7 6.7 0 1 1 13.4 12C11 14.6 6.900 16.600 6.800 21.800" fill="none" stroke="#2088d0" stroke-width="2.100"/><rect x="5.200" y="23.300" width="2.900" height="2.500" fill="#2088d0"/></g>
<g id="pv"><rect x="4.6" y="4.6" width="8.6" height="8" /><rect x="16.6" y="4.6" width="20.8" height="8"/><rect x="4.6" y="16.8" width="8.6" height="20.8"/></g>
</defs>
<!-- chevrons -->
<use href="#chev" x="71" y="144"/><use href="#chev" x="345" y="144"/><use href="#chev" x="446" y="141"/>
<use href="#chev" x="802" y="71.800"/><use href="#chev" x="865" y="71.800"/><use href="#chev" x="928" y="71.800"/>
<use href="#chev" x="802" y="111"/><use href="#chev" x="865" y="111"/><use href="#chev" x="928" y="111"/>
<use href="#chev" x="802" y="150"/><use href="#chev" x="865" y="150"/>
<use href="#chev" x="978" y="144"/><use href="#chev" x="1057" y="146"/>
<use href="#chev" x="1519.6" y="144"/><use href="#chev" x="1713.8" y="141"/><use href="#chev" x="1802" y="141"/>
<path d="M1881.5 175.5l6.6 6.6 6.6-6.6" fill="none" stroke="#333" stroke-width="1.5"/>
<!-- dialog launcher -->
<g fill="none" stroke="#444" stroke-width="1.3"><path d="M1107 180h-5v10.5"/><path d="M1102.5 180v0M1105 183.5l7 7M1112.3 185v5.7h-5.8"/></g>

<!-- PivotTable -->
<g transform="translate(55,63)"><rect x="0.900" y="0.900" width="40.200" height="40.200" fill="#fff" stroke="#3b3a39" stroke-width="1.700"/><rect x="3.200" y="3.200" width="35.600" height="35.600" fill="#f8f8f8"/><use href="#pv" fill="#c8c6c4" stroke="#807e7c" stroke-width="1.3"/></g>
<!-- Recommended PivotTables -->
<g transform="translate(166,63)"><rect x="1.700" y="1.700" width="38.600" height="38.600" fill="#fff"/><rect x="3.200" y="3.200" width="35.600" height="35.600" fill="#f8f8f8"/><path d="M41.100 17.600V0.900H0.900V41.100H33" fill="none" stroke="#3b3a39" stroke-width="1.700"/><use href="#pv" fill="#c8c6c4" stroke="#807e7c" stroke-width="1.3"/><use href="#qm" x="30" y="19"/></g>
<!-- Table (disabled) -->
<g transform="translate(264,63)" stroke="#a6a6a6" stroke-width="1.500" fill="none"><rect x="1" y="0.900" width="40.200" height="40.200" fill="#f2f2f2" stroke="#9c9c9c"/><path d="M1 9.300h40.200M1 20.200h40.200M1 30.700h40.200M14.100 9.300v31.800M27.700 9.300v31.800"/><path d="M3.200 3.100h8.600l-4.300 4.400zM16.700 3.100h8.600l-4.300 4.400zM30.200 3.100h8.600l-4.300 4.400z" fill="#a8a8a8" stroke="none"/></g>
<!-- Forms -->
<g transform="translate(326,63)">
<rect x="12" y="0" width="36" height="40.700" rx="1.800" fill="#036c70"/>
<path d="M13.800 0h32.400a1.800 1.800 0 0 1 1.800 1.800V21H12V1.800A1.800 1.800 0 0 1 13.800 0z" fill="#37c6d0"/>
<circle cx="37.300" cy="10.300" r="7.300" fill="#1a9ba1"/><circle cx="37.300" cy="10.300" r="4.400" fill="#0b7b83"/>
<rect x="31" y="25" width="13" height="12.700" fill="#1a9ba1"/>
<rect x="12" y="10" width="14.300" height="25" fill="#000" opacity="0.220"/>
<rect x="0" y="9" width="24.300" height="24" rx="1.600" fill="#05828a"/>
<path d="M7 13h10v3.300h-6v3h5.700v3.300h-5.700v6.400H7z" fill="#fff"/>
</g>
<!-- Illustrations -->
<rect x="431" y="61" width="27" height="27" fill="#83beec" stroke="#1169bd" stroke-width="2"/>
<circle cx="457" cy="87" r="14.6" fill="#fafafa" stroke="#3b3a39" stroke-width="1.6"/>
<!-- Checkbox -->
<rect x="544.8" y="63.8" width="40.6" height="40.6" fill="#fafafa" stroke="#3b3a39" stroke-width="1.6"/>
<path d="M548.8 86.6l9.6 8.6 22.2-22.6" fill="none" stroke="#2ea44f" stroke-width="2"/>
<!-- Recommended charts -->
<rect x="675.8" y="63.8" width="12.4" height="40.4" fill="#c8c6c4" stroke="#807e7c" stroke-width="1.6"/>
<rect x="688.2" y="79" width="10.4" height="25.2" fill="#fff" stroke="#3b3a39" stroke-width="1.6"/>
<use href="#qm" x="701.600" y="62.600"/>

<!-- column chart -->
<g transform="translate(769,62)"><rect x="0.7" y="11.5" width="7.3" height="11.8" fill="#c8c6c4" stroke="#807e7c" stroke-width="1.4"/><rect x="8" y="0.7" width="8" height="22.6" fill="#fff" stroke="#3b3a39" stroke-width="1.4"/><rect x="16" y="5.5" width="7.3" height="17.8" fill="#83beec" stroke="#1169bd" stroke-width="1.4"/></g>
<!-- hierarchy -->
<g transform="translate(832,62)"><rect x="0.7" y="0.7" width="10.3" height="22.6" fill="#c8c6c4" stroke="#807e7c" stroke-width="1.4"/><rect x="11" y="0.7" width="12.3" height="14" fill="#fff" stroke="#3b3a39" stroke-width="1.4"/><rect x="11" y="14.7" width="12.3" height="8.6" fill="#83beec" stroke="#1169bd" stroke-width="1.4"/></g>
<!-- waterfall -->
<g transform="translate(895,62)" stroke-width="1.300"><rect x="1" y="10" width="3.200" height="13" fill="#e3e3e3" stroke="#807e7c"/><rect x="7" y="0.900" width="3.200" height="9.200" fill="#e3e3e3" stroke="#807e7c"/><path d="M4.200 10h2.800" stroke="#807e7c"/><rect x="12.800" y="0.900" width="4.600" height="13" fill="#fff" stroke="#3b3a39" stroke-width="1.500"/><path d="M10.200 0.900h2.600M17.400 13.900h2.400" stroke="#3b3a39"/><rect x="19.900" y="14.200" width="3.600" height="8.800" fill="#83beec" stroke="#1169bd" stroke-width="1.500"/></g>
<!-- line chart -->
<g transform="translate(769,101)" fill="none" stroke-width="1.500"><path d="M1.400 13.300L4.300 4.600l9.200 13.300 9.200-13.300" stroke="#3b3a39"/><path d="M1.400 21.300L15.200 1.300l7.500 12" stroke="#2088d0"/><g fill="#3b3a39" stroke="none"><rect x="0" y="11.900" width="2.800" height="2.800"/><rect x="2.900" y="3.200" width="2.800" height="2.800"/><rect x="12.100" y="16.500" width="2.800" height="2.800"/><rect x="21.300" y="3.200" width="2.800" height="2.800"/></g><g fill="#2088d0" stroke="none"><rect x="0" y="19.900" width="2.800" height="2.800"/><rect x="13.800" y="0" width="2.800" height="2.800"/><rect x="21.300" y="11.900" width="2.800" height="2.800"/></g></g>
<!-- histogram -->
<g transform="translate(833,101)" fill="#83beec" stroke="#1169bd" stroke-width="1.4"><rect x="0.7" y="10" width="4.7" height="13.3"/><rect x="5.4" y="0.7" width="4.7" height="22.6"/><rect x="10.1" y="6.5" width="4.7" height="16.8"/><rect x="14.8" y="13.5" width="4.5" height="9.8"/></g>
<!-- combo -->
<g transform="translate(895,101)" stroke-width="1.400"><rect x="1.100" y="8.600" width="7.200" height="14.500" fill="#c8c6c4" stroke="#807e7c"/><rect x="8.600" y="13.200" width="7.200" height="9.900" fill="#fff" stroke="#3b3a39"/><rect x="16.600" y="17.400" width="6.800" height="5.700" fill="#83beec" stroke="#1169bd"/><path d="M3.700 2.300l9.200 4.600 7.500 4.600" fill="none" stroke="#3b3a39" stroke-width="1.500"/><g fill="#3b3a39" stroke="none"><rect x="1.700" y="0.400" width="4.100" height="3.800"/><rect x="10.800" y="5" width="4.200" height="3.800"/><rect x="18.300" y="9.600" width="4.200" height="3.700"/></g></g>
<!-- pie -->
<g transform="translate(769,140)"><path d="M13.900 0.900A11.500 11.500 0 1 1 0.900 13.900H13.900z" fill="#83beec" stroke="#1169bd" stroke-width="1.500"/><path d="M11.500 0.900V11.300H0.900A10.600 10.600 0 0 1 11.500 0.900z" fill="#c8c6c4" stroke="#807e7c" stroke-width="1.400"/></g>
<!-- scatter -->
<g transform="translate(832,140)"><path d="M0.8 0v23.2H24" fill="none" stroke="#3b3a39" stroke-width="1.5"/><g fill="#3b3a39"><rect x="18" y="2" width="3" height="3"/><rect x="4.5" y="16" width="3" height="3"/></g><g fill="#83beec"><rect x="5" y="6" width="3" height="3"/><rect x="11" y="10.5" width="3" height="3"/><rect x="18" y="15" width="3" height="3"/></g></g>

<!-- Maps globe -->
<g fill="none" stroke="#3b3a39" stroke-width="1.6"><circle cx="984.800" cy="80.700" r="14.100" fill="#fafafa"/><path d="M984.500 62A19.300 19.300 0 1 0 998.600 94.600"/><path d="M984 99.800v4.300M971.300 104.100h25.400"/></g>
<g fill="#2f9648" transform="translate(-0.200,0.500)"><path d="M973.5 74c2-3 5-4.5 7.5-4.2 1.2 1.5-.3 3-1.8 3.6 1.6 1.4 3.4 2.2 2.4 4.2-1.3 1.6-3.2.6-4.6 1.8-1 1.3.6 2.6 2 3.4-1.4 1-3.6.6-5-1.2-1.6-2.2-1.6-5.2-.5-7.600z"/><path d="M986.5 67.5c3.6.2 7 2 9.200 5 1.500 2.400 1.800 5 1 7.600-1.500.6-2.800-.4-3.600-2-.8-1.600-2.800-1.200-4.200-2.400-1.400-1.400.2-3-.6-4.600-.6-1.300-2.200-2-1.800-3.600z"/><path d="M982 85.500c2.600-1.400 6.400-1.200 8.600.8 1 2-.6 4.200-2.200 5.800-1.200 1.200-2.800 2-4 1.200-.8-1.400.2-3-.8-4.400-.8-1-2-2-1.600-3.400z"/></g>
<!-- PivotChart -->
<g transform="translate(1041,63)"><rect x="1.600" y="1.600" width="39.400" height="38.800" fill="#fff"/><rect x="3" y="3" width="36.600" height="36" fill="#f8f8f8"/><path d="M41.300 23.500V0.800H0.900V40.800H19.600" fill="none" stroke="#3b3a39" stroke-width="1.600"/><g fill="#c8c6c4" stroke="#807e7c" stroke-width="1.3"><rect x="4.800" y="5.200" width="8.2" height="7.300"/><rect x="16.900" y="5.200" width="20.300" height="7.300"/><rect x="4.800" y="17.200" width="8.200" height="19.400"/></g>
<rect x="21.600" y="32.400" width="7.700" height="11.500" fill="#c8c6c4" stroke="#807e7c" stroke-width="1.500"/><rect x="29.300" y="22" width="8.300" height="21.900" fill="#fff" stroke="#3b3a39" stroke-width="1.500"/><rect x="37.600" y="26" width="6.900" height="17.900" fill="#83beec" stroke="#1169bd" stroke-width="1.500"/></g>

<!-- Sparklines -->
<g fill="none" stroke="#3b3a39" stroke-width="1.500"><path d="M1141 72.500h42M1141 95.200h42M1147.700 66v35.700"/><path d="M1210 72.500h42M1210 95.200h42M1216.700 66v35.700"/><path d="M1279 72.500h42M1279 95.200h42M1285.800 66v35.700"/></g>
<path d="M1147.700 83.400l5.600 7.200 8.300-11.400 7.300 11.400 9.300-12.900 4.800 7.700" fill="none" stroke="#2088d0" stroke-width="1.600"/>
<g fill="#83beec" stroke="#2088d0" stroke-width="1.400"><rect x="1220.800" y="83.400" width="5.600" height="9"/><rect x="1229.800" y="76.800" width="5.800" height="15.600"/><rect x="1238.800" y="79.800" width="5.800" height="12.600"/></g>
<g fill="#83beec" stroke="#1169bd" stroke-width="1.300"><rect x="1289.800" y="77.300" width="3.600" height="6"/><rect x="1296" y="77.300" width="3.600" height="6"/><rect x="1314.200" y="77.300" width="3.400" height="6"/></g>
<g fill="#c8c6c4" stroke="#605e5c" stroke-width="1.300"><rect x="1302.300" y="85.200" width="3.400" height="5.800"/><rect x="1308.200" y="85.200" width="3.400" height="5.800"/></g>

<!-- Slicer -->
<g transform="translate(1361,62)"><rect x="1" y="0.800" width="22.200" height="22.200" fill="#fafafa"/><path d="M23.200 9V0.800H1V23H13.600" fill="none" stroke="#3b3a39" stroke-width="1.600"/><rect x="1.800" y="1.600" width="20.600" height="3.600" fill="#c8c6c4"/><path d="M1 5.700h22.200" stroke="#3b3a39" stroke-width="1.300"/><rect x="5.200" y="8.200" width="13.800" height="4.600" fill="#a9d3f2" stroke="#0f6cbd" stroke-width="1.700"/><rect x="5" y="15.800" width="8.600" height="4.400" fill="#c8c6c4" stroke="#807e7c" stroke-width="1.300"/><path d="M10.800 10.700h13.200l-4.600 6.200v6.700h-3.900v-6.700z" fill="#fafafa" stroke="#fff" stroke-width="3.200"/><path d="M10.800 10.700h13.200l-4.600 6.200v6.700h-3.900v-6.700z" fill="#fafafa" stroke="#3b3a39" stroke-width="1.500" stroke-linejoin="miter"/></g>
<!-- Timeline -->
<g transform="translate(1361,104)"><rect x="1" y="1" width="22.200" height="16" fill="#fafafa"/><path d="M23.200 7V1H1V17H13.600" fill="none" stroke="#3b3a39" stroke-width="1.600"/><rect x="1.800" y="1.800" width="20.600" height="3.400" fill="#c8c6c4"/><path d="M1 5.700h22.200" stroke="#3b3a39" stroke-width="1.300"/><rect x="5" y="9.800" width="3.800" height="3.800" fill="#c8c6c4" stroke="#807e7c" stroke-width="1.300"/><path d="M10.800 8.700h13.200l-4.600 5.800v6.200h-3.900v-6.200z" fill="#fafafa" stroke="#fff" stroke-width="3.200"/><path d="M10.800 8.700h13.200l-4.600 5.800v6.200h-3.900v-6.200z" fill="#fafafa" stroke="#3b3a39" stroke-width="1.500"/></g>

<!-- Link -->
<g fill="none" stroke="#3b3a39" stroke-width="1.600"><path d="M1519.200 87.200H1526a8.600 8.600 0 0 0 0-17.200h-12.400a8.600 8.600 0 0 0-0.700 17.170"/><path d="M1530.800 80.400H1524a8.600 8.600 0 0 0 0 17.200h12.400a8.600 8.600 0 0 0 0.700-17.170"/></g>
<!-- Comment -->
<path d="M1613.600 64.800h29.800v27.300h-26.800l-9.400 9.600v-9.600h-4.600V74.700" fill="#f8f8f8" stroke="#3b3a39" stroke-width="1.600"/>
<path d="M1599 71.300h23M1610.300 60.200v22.700" fill="none" stroke="#2fa54f" stroke-width="2"/>
<!-- Text A -->
<path d="M1703.300 86L1734.200 62l-6.200 38.700M1714.800 78.600l14.600 8.200" fill="none" stroke="#1f8ad3" stroke-width="3.300" stroke-linejoin="bevel"/>
<!-- Omega -->
<path d="M1789 97.800h10.800v-2C1793.500 91.500 1790.800 86 1790.800 79.800a15.600 16 0 0 1 31.200 0c0 6.200-2.700 11.700-9 16v2h10.800" fill="none" stroke="#3b3a39" stroke-width="2"/>
</svg>
<div class="a mk" style="left:182px;top:1px">b</div>
<div class="a mk" style="left:62px;top:67px">c</div>
</div>
<!-- ===== Dialog ===== -->
<div id="dialog">
<div class="a dframe"></div>
<div class="a dframe2"></div>
<div class="a" style="left:1258.400px;top:326px;width:1px;height:360px;opacity:.8;background:repeating-linear-gradient(#36457a 0,#36457a 18px,transparent 18px,transparent 30px)"></div>
<div class="a" style="left:663px;top:332px;width:1.200px;height:350px;background:repeating-linear-gradient(#3a4a80 0,#3a4a80 9px,transparent 9px,transparent 30px);opacity:.8"></div>
<div class="a dlg"><div class="a" style="left:-0.5px;top:-0.5px">
  <div class="a dtitle"></div>
  <div class="a dline" style="left:169px;top:61px;width:419px"></div>
  <div class="a dline" style="left:16px;top:80px;width:572px"></div>
  <div class="a inp" style="left:131px;top:88px;width:457px;height:29px"></div>
  <div class="a" style="left:135px;top:92px;width:219px;height:21px;background:#c8c8c8"></div>
  <div class="a" style="left:354px;top:92px;width:1px;height:22px;background:#000"></div>
  <div class="a ibtn" style="left:559.500px;top:89.500px"></div>
  <div class="a dline" style="left:372px;top:143px;width:216px"></div>
  <div class="a" style="left:16px;top:166px;width:20px;height:20px;border-radius:50%;background:#005fb8"></div>
  <div class="a" style="left:22px;top:172px;width:8px;height:8px;border-radius:50%;background:#fff"></div>
  <div class="a" style="left:16px;top:197px;width:20px;height:20px;border-radius:50%;background:#f6f6f6;border:1px solid #727272;box-sizing:border-box"></div>
  <div class="a inp" style="left:94px;top:227px;width:494px;height:29px;border-color:#9a9a9a"></div>
  <div class="a ibtn" style="left:559.500px;top:228.500px"></div>
  <div class="a dline" style="left:376px;top:276px;width:212px"></div>
  <div class="a" style="left:16px;top:295px;width:20px;height:20px;border-radius:4px;background:#f6f6f6;border:1px solid #727272;box-sizing:border-box"></div>
  <div class="a" style="left:349px;top:331px;width:111px;height:34px;border-radius:5px;background:#fdfdfd;border:1.5px solid #0067c0;box-sizing:border-box"></div>
  <div class="a" style="left:476px;top:331px;width:111px;height:34px;border-radius:5px;background:#fdfdfd;border:1px solid #d0d0d0;box-sizing:border-box"></div>
</div></div>
<svg style="left:0;top:0" width="1923" height="901" viewBox="0 0 1923 901">
  <path d="M1216.500 332.500l14.500 14.500M1231 332.500l-14.500 14.500" fill="none" stroke="#1a1a1a" stroke-width="1.500"/>
  <path d="M1150.700 336.800a3.400 3.400 0 1 1 5.400 2.700c-1.500 1.100-2.200 1.900-2.200 3.900" fill="none" stroke="#1a1a1a" stroke-width="1.300"/><rect x="1153.100" y="345.300" width="1.600" height="1.700" fill="#1a1a1a"/>
  <g id="uparr"><path d="M1236 412.300l-5.600 6h3.800v5h3.600v-5h3.800z" fill="#000" stroke="#000" stroke-width="1"/><path d="M1230.200 426.300h11.700" stroke="#000" stroke-width="1.400"/></g>
  <use href="#uparr" y="139"/>
  <path d="M710.500 503h11.500M710.500 534h8M681.500 568h7.500M690.500 429.800h8M884.800 632h13.500" stroke="#1a1a1a" stroke-width="1.200"/>
  <g fill="#c6c6c6"><rect x="1253.300" y="678.300" width="2.400" height="2.400"/><rect x="1249.300" y="682.300" width="2.400" height="2.400"/><rect x="1253.300" y="682.300" width="2.400" height="2.400"/><rect x="1245.300" y="686.300" width="2.400" height="2.400"/><rect x="1249.300" y="686.300" width="2.400" height="2.400"/><rect x="1253.300" y="686.300" width="2.400" height="2.400"/></g>
</svg>
<span class="t t-dlg" style="left:675.67px;top:332.00px;font-size:17.5px;color:#1a1a1a;transform:scaleX(1.0327)">PivotTable from table or range</span>
<span class="t t-dlg" style="left:672.50px;top:373.00px;font-size:15.8px;color:#1a1a1a;transform:scaleX(0.9625)">Select a table or range</span>
<span class="t t-dlg" style="left:690.00px;top:415.00px;font-size:15.8px;color:#1a1a1a;transform:scaleX(0.9814)">Table/Range:</span>
<span class="t t-dlg" style="left:799.50px;top:415.00px;font-size:15.8px;color:#000;transform:scaleX(0.9627)">Table_02_Update_History_7764</span>
<span class="t t-dlg" style="left:672.50px;top:454.00px;font-size:15.8px;color:#1a1a1a;transform:scaleX(0.9799)">Choose where you want the PivotTable to be placed</span>
<span class="t t-dlg" style="left:709.30px;top:488.00px;font-size:15.8px;color:#1a1a1a;transform:scaleX(0.9990)">New Worksheet</span>
<span class="t t-dlg" style="left:709.32px;top:519.00px;font-size:15.8px;color:#1a1a1a;transform:scaleX(0.9790)">Existing Worksheet</span>
<span class="t t-dlg" style="left:680.61px;top:553.00px;font-size:15.8px;color:#8a8a8a;transform:scaleX(0.9899)">Location:</span>
<span class="t t-dlg" style="left:672.50px;top:588.00px;font-size:15.8px;color:#1a1a1a;transform:scaleX(0.9873)">Choose whether you want to analyze multiple tables</span>
<span class="t t-dlg" style="left:710.30px;top:617.00px;font-size:15.8px;color:#1a1a1a;transform:scaleX(0.9883)">Add this data to the Data Model</span>
<span class="t t-dlg" style="left:1058.60px;top:659.00px;font-size:15.8px;color:#1a1a1a;transform:scaleX(0.8760)">OK</span>
<span class="t t-dlg" style="left:1172.60px;top:659.00px;font-size:15.8px;color:#1a1a1a;transform:scaleX(0.9227)">Cancel</span>
<div class="a mk" style="left:1010px;top:648px">d</div>
</div>
<!-- ===== Sheet tabs ===== -->
<div id="sheettabs">
<div class="a stbar"></div>
<div class="a stab" style="left:168px;width:222px;background:#4682b4"></div>
<div class="a ssep" style="left:396px"></div>
<div class="a stab" style="left:403px;width:197px;background:#4682b4"></div>
<div class="a ssep" style="left:606px"></div>
<div class="a" style="left:610px;top:860px;width:210px;height:6px;background:#fff;border-radius:0 0 5px 5px"></div>
<div class="a" style="left:614px;top:860px;width:202px;height:37px;background:linear-gradient(#ffffff 18%,#e3ebf5 50%,#c6d7ea)"></div>
<div class="a" style="left:625px;top:895px;width:179px;height:2px;background:#107c41"></div>
<div class="a ssep" style="left:823px"></div>
<div class="a stab" style="left:829px;width:210px;background:#1e90ff;border-radius:7px 0 0 0"></div>
<div class="a" style="left:829px;top:866px;width:210px;height:31px;overflow:hidden"><div class="a" style="left:-829px;top:-866px">
<span class="t t-stab4" style="left:846.70px;top:876.00px;font-size:20.5px;color:#fff;transform:scaleX(0.9647)">03-AV_Status_(Security</span>
</div></div>
<span class="t t-stab" style="left:183.50px;top:876.00px;font-size:20.5px;color:#fff;transform:scaleX(0.9955)">02-Pending_Updates</span>
<span class="t t-stab" style="left:417.50px;top:876.00px;font-size:20.5px;color:#fff;transform:scaleX(1.0091)">02-Update_Config</span>
<span class="t t-stab" style="left:625.40px;top:871.00px;font-size:20.5px;color:#222;transform:scaleX(1.0381)">02-Update_History</span>
<svg style="left:0;top:860px" width="1923" height="41" viewBox="0 860 1923 41">
  <g fill="none" stroke="#444" stroke-width="1.600"><path d="M45.500 876l-7.500 7 7.500 7"/><path d="M87 876l7.500 7-7.500 7"/><path d="M1102.500 883.300h15.500M1110.200 875.500v15.500"/></g>
  <g fill="#444"><circle cx="131" cy="882.700" r="1.900"/><circle cx="137.300" cy="882.700" r="1.900"/><circle cx="143.600" cy="882.700" r="1.900"/>
  <circle cx="1056" cy="882.700" r="1.900"/><circle cx="1062.300" cy="882.700" r="1.900"/><circle cx="1068.600" cy="882.700" r="1.900"/>
  <rect x="1157.300" y="878" width="2.800" height="2.800"/><rect x="1157.300" y="883.600" width="2.800" height="2.800"/><rect x="1157.300" y="889.200" width="2.800" height="2.800"/></g>
  <rect x="1183" y="869.500" width="711" height="27" rx="13" fill="#f4f4f4"/>
  <path d="M1199.800 877.800v10.600l-7.800-5.300z" fill="#6e6e6e" stroke="#6e6e6e" stroke-width="1.800" stroke-linejoin="round"/>
  <path d="M1877 877.800v10.600l7.800-5.300z" fill="#6e6e6e" stroke="#6e6e6e" stroke-width="1.800" stroke-linejoin="round"/>
  <rect x="1209.500" y="877" width="564.500" height="12" rx="6" fill="#6e6e6e"/>
</svg>
</div>
</body>
</html>
